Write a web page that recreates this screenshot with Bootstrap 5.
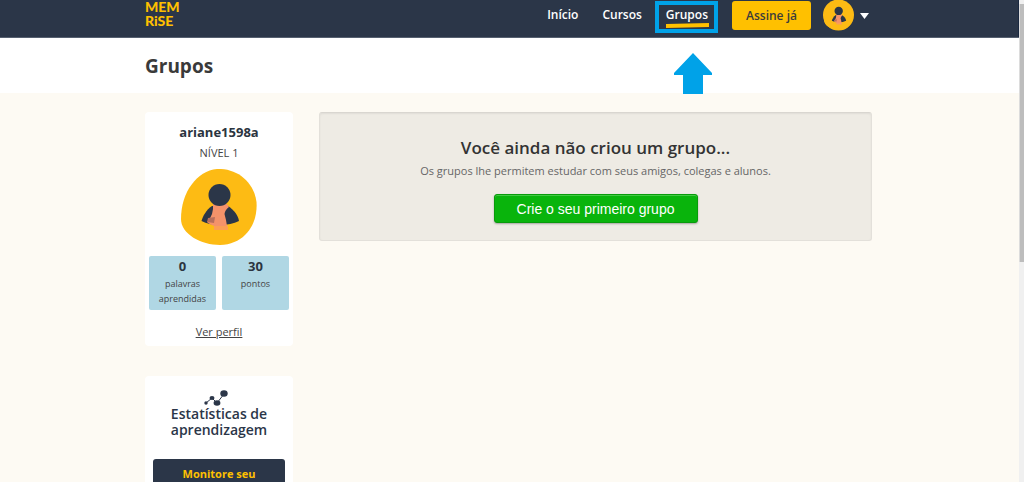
<!DOCTYPE html>
<html lang="pt-BR">
<head>
<meta charset="utf-8">
<meta name="viewport" content="width=device-width, initial-scale=1">
<title>Grupos - Memrise</title>
<link href="https://cdn.jsdelivr.net/npm/bootstrap@5.3.0/dist/css/bootstrap.min.css" rel="stylesheet">
<style>
  :root { --navy: #2b3648; --yellow: #ffc000; --sky: #00a2e8; --cream: #fdfaf3; }
  body { font-family: "Open Sans", "Noto Sans", sans-serif; font-size: 11px; line-height: 16px; color: #444; background: var(--cream); }
  a { color: inherit; }
  .page-wrap { max-width: 729px; padding-right: 2px; }
  .site-header { background: var(--navy); height: 38px; border-bottom: 1px solid #566070; box-shadow: inset -1px 0 #1b2940; }
  .brand-mark { color: var(--yellow); font: 900 14px/14px Lato, sans-serif; }
  .header-tools { padding-right: 3px; }
  .site-nav .nav-link { color: #fff; font-size: 12px; font-weight: 600; line-height: 16px; padding: 7px 0; }
  .nav-stroke { left: 0; top: 23px; width: 43px; height: 5px; }
  .callout-box { left: -11px; top: 1px; width: 63px; height: 32px; border: 4px solid var(--sky); pointer-events: none; }
  .callout-arrow { left: 8px; top: 53px; width: 38px; height: 41px; z-index: 2; }
  .btn-upgrade { background: var(--yellow); color: #3c3c3c; font-size: 12px; font-weight: 600; line-height: 16px; padding: 7px 13px 6px; border: 0; border-radius: 3px; width: 79px; margin: 1px 12px 0 24px; white-space: nowrap; }
  .user-menu { gap: 6px; }
  .title-bar { background: #fff; height: 55px; }
  .title-bar h1 { font-size: 19px; font-weight: 700; line-height: 24px; color: #3a3a3a; }
  main { gap: 26px; padding-top: 19px; }
  .side-col { width: 148px; }
  .panel { background: #fff; border-radius: 4px; }
  .side-user { padding: 11px 4px 6px; margin-bottom: 30px; }
  .user-name { font-size: 13px; font-weight: 700; line-height: 18px; color: #2b3440; }
  .user-level { margin: 4px 0 8px; }
  .stat-row { gap: 6px; margin-top: 11px; }
  .stat { background: #b0d7e4; border-radius: 2px; font-size: 9px; line-height: 15px; height: 54px; padding: 0 4px; }
  .stat strong { font-size: 13px; line-height: 20px; color: #2b3440; }
  .profile-link { margin-top: 14px; }
  .side-stats { padding: 14px 8px 24px; }
  .stats-title { font-size: 14px; font-weight: 600; line-height: 16px; color: #2b3648; }
  .btn-stats { background: var(--navy); color: var(--yellow); font-size: 11px; font-weight: 700; line-height: 16px; margin-top: 21px; padding: 7px 24px; border: 0; border-radius: 3px; }
  .empty-box { background: #eeebe4; border: 1px solid #e3e0da; border-top-color: #d9d6d0; border-radius: 3px; box-shadow: inset 0 1px 2px rgba(0,0,0,.06); height: 129px; padding-top: 23px; }
  .empty-box h2 { font-size: 17px; font-weight: 600; line-height: 24px; color: #333; }
  .empty-box p { color: #666; margin: 3px 0 15px; }
  .btn-create { background: #09b40c; color: #fff; font: 14px/16px "Liberation Sans", Arial, sans-serif; width: 204px; height: 29px; padding: 0; border: 1px solid #089b0b; border-radius: 3px; box-shadow: inset 0 1px #43c944, 0 1px 2px rgba(0,0,0,.3); }
  .scroll-track { width: 5px; background: #f0f0f0; padding-top: 4px; }
  .scroll-thumb { height: 54%; background: #bdbdbd; border-left: 1px solid #dcdcdc; }
</style>
<script src="https://cdn.jsdelivr.net/npm/bootstrap@5.3.0/dist/js/bootstrap.bundle.min.js" defer></script>
</head>
<body>
<svg width="0" height="0" class="position-absolute" aria-hidden="true">
  <symbol id="avatar" viewBox="0 0 76 76">
    <path d="M36 0C56-1 73 13 75.500 33C77 54 65 75 39 76C20 76 0 65 0 50C0 23 16 2 36 0Z" fill="#fdbb14"/>
    <path d="M31 37C25 41 22 47 20.500 52Q28 56 39 56Q50 56 58 52C57 46 53 41 47 37Z" fill="#2b3648"/>
    <path d="M32 35H46L48 38Q44 41 43.500 45Q45 50 46 57L47 58V61H33V57Q28 55 26 53Q33 46 32 35Z" fill="#f4926a"/>
    <path d="M27 49L34 48L33 54L26 53Z" fill="#b86f5c"/>
    <path d="M33 57H47V61H33Z" fill="#fb9f55"/>
    <circle cx="38.500" cy="26" r="11" fill="#2b3648"/>
  </symbol>
</svg>
<div class="d-flex vh-100 overflow-hidden">
  <div class="flex-grow-1">
    <header class="site-header">
      <div class="page-wrap mx-auto d-flex align-items-start justify-content-between">
        <a href="#" class="brand-mark text-decoration-none" aria-label="Memrise">MEM<br>RiSE</a>
        <div class="header-tools d-flex align-items-start">
          <nav class="site-nav nav flex-nowrap gap-4">
            <a class="nav-link" href="#">Início</a>
            <a class="nav-link" href="#">Cursos</a>
            <div class="position-relative">
              <a class="nav-link active" href="#" aria-current="page">Grupos</a>
              <svg class="nav-stroke position-absolute" viewBox="0 0 43 5" aria-hidden="true"><path d="M0 1L43 0V4L0 5Z" fill="#ffc000"/></svg>
              <div class="callout-box position-absolute"></div>
              <svg class="callout-arrow position-absolute" viewBox="0 0 38 41" aria-hidden="true"><path d="M19 0L38 20V22H29V41H9V22H0V20Z" fill="#00a2e8"/></svg>
            </div>
          </nav>
          <button type="button" class="btn btn-upgrade">Assine já</button>
          <button type="button" class="user-menu btn border-0 p-0 d-flex align-items-center" aria-label="Menu do usuário">
            <svg width="31" height="31" viewBox="0 0 31 31" aria-hidden="true"><circle cx="15.500" cy="15" r="15.500" fill="#fdbb14"/><use href="#avatar" x="1" y="1" width="29" height="29"/></svg>
            <svg width="9" height="6" viewBox="0 0 9 6" aria-hidden="true"><path d="M0 0H9L4.500 6Z" fill="#fff"/></svg>
          </button>
        </div>
      </div>
    </header>
    <div class="title-bar d-flex align-items-center">
      <div class="page-wrap mx-auto w-100"><h1 class="m-0">Grupos</h1></div>
    </div>
    <main class="page-wrap mx-auto d-flex align-items-start">
      <aside class="side-col flex-shrink-0 text-center">
        <section class="panel side-user">
          <div class="user-name">ariane1598a</div>
          <div class="user-level">NÍVEL 1</div>
          <svg class="user-pic" width="76" height="76" aria-hidden="true"><use href="#avatar"/></svg>
          <div class="stat-row d-flex">
            <div class="stat flex-fill w-50"><strong class="d-block">0</strong>palavras aprendidas</div>
            <div class="stat flex-fill w-50"><strong class="d-block">30</strong>pontos</div>
          </div>
          <a href="#" class="d-block profile-link">Ver perfil</a>
        </section>
        <section class="panel side-stats">
          <svg class="d-block mx-auto" width="30" height="16" viewBox="0 0 30 16" aria-hidden="true">
            <path d="M2 13L8 8L13 13L20 4" fill="none" stroke="#2b3648"/>
            <g fill="#2b3648"><circle cx="2" cy="13" r="1.700"/><ellipse cx="8" cy="8" rx="2.500" ry="2"/><ellipse cx="13" cy="13" rx="3.400" ry="2.800"/><ellipse cx="20" cy="3.500" rx="3.700" ry="3.300"/></g>
          </svg>
          <h2 class="stats-title m-0">Estatísticas de aprendizagem</h2>
          <button type="button" class="btn btn-stats w-100">Monitore seu progresso</button>
        </section>
      </aside>
      <section class="empty-box flex-grow-1 text-center">
        <h2 class="m-0">Você ainda não criou um grupo...</h2>
        <p>Os grupos lhe permitem estudar com seus amigos, colegas e alunos.</p>
        <button type="button" class="btn btn-create">Crie o seu primeiro grupo</button>
      </section>
    </main>
  </div>
  <div class="scroll-track flex-shrink-0"><div class="scroll-thumb"></div></div>
</div>
</body>
</html>
